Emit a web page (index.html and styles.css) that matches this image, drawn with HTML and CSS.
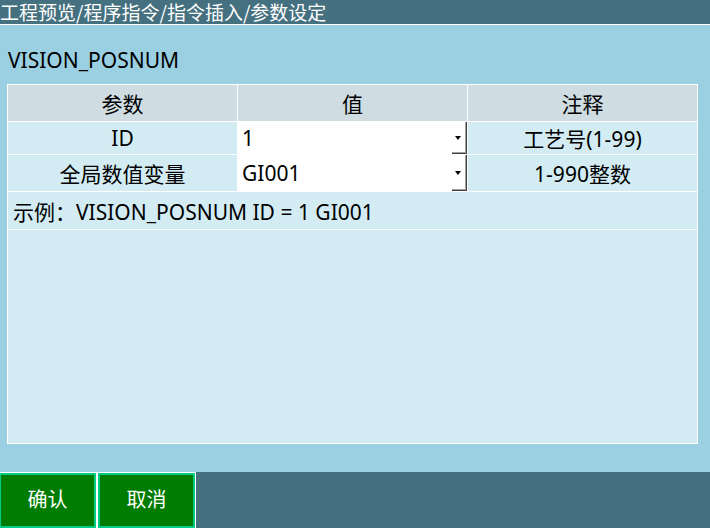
FILE: index.html
```html
<!DOCTYPE html>
<html lang="zh">
<head>
<meta charset="utf-8">
<link rel="stylesheet" href="styles.css">
</head>
<body>
<div class="screen">
  <div class="titlebar">工程预览/程序指令/指令插入/参数设定</div>
  <div class="main">
    <div class="heading">VISION_POSNUM</div>
    <div class="table">
      <div class="cell head">参数</div>
      <div class="cell head">值</div>
      <div class="cell head">注释</div>

      <div class="cell">ID</div>
      <div class="cell combo"><span class="combo-text">1</span><span class="combo-btn"><span class="arrow"></span></span></div>
      <div class="cell">工艺号(1-99)</div>

      <div class="cell">全局数值变量</div>
      <div class="cell combo"><span class="combo-text">GI001</span><span class="combo-btn"><span class="arrow"></span></span></div>
      <div class="cell">1-990整数</div>

      <div class="cell example">示例：VISION_POSNUM ID = 1 GI001</div>
      <div class="cell empty"></div>
    </div>
  </div>
  <div class="bottombar">
    <button class="btn btn-first">确认</button>
    <button class="btn">取消</button>
  </div>
</div>
</body>
</html>
```

FILE: styles.css
```css
* { box-sizing: border-box; }
html, body {
  margin: 0;
  padding: 0;
}
body {
  font-family: "Noto Sans", "Noto Sans CJK SC", sans-serif;
  background: #9bcfe2;
  color: #000;
  width: 710px;
  height: 528px;
  overflow: hidden;
}
.screen {
  display: flex;
  flex-direction: column;
  height: 528px;
}
.titlebar {
  height: 25px;
  background: #45707f;
  color: #fff;
  font-family: "Noto Sans CJK SC", sans-serif;
  font-size: 19px;
  line-height: 23px;
  border-bottom: 1px solid #fff;
  white-space: nowrap;
}
.main {
  flex: 1;
  padding: 0 0 0 7px;
  display: flex;
  flex-direction: column;
}
.heading {
  height: 59px;
  padding: 21px 0 0 1px;
  font-size: 21px;
  line-height: 28px;
}
.table {
  width: 691px;
  height: 360px;
  border: 1px solid #fff;
  background: #fff;
  display: grid;
  grid-template-columns: 229px 229px 229px;
  grid-template-rows: 36px 32px 36px 37px 1fr;
  gap: 1px;
}
.cell {
  background: #d3ecf4;
  font-size: 21px;
  display: flex;
  align-items: center;
  justify-content: center;
  white-space: nowrap;
}
.cell.head {
  background: #cfdce1;
}
.cell.combo {
  background: #fff;
  justify-content: flex-start;
  align-items: stretch;
}
.combo-text {
  flex: 1;
  padding-left: 4px;
  display: flex;
  align-items: center;
}
.combo-btn {
  width: 15px;
  border-right: 1px solid #404040;
  border-bottom: 1px solid #404040;
  box-shadow: inset -1px -1px 0 #a0a0a0;
  display: flex;
  align-items: center;
  justify-content: center;
  padding-right: 2px;
}
.arrow {
  width: 0;
  height: 0;
  border-left: 3px solid transparent;
  border-right: 3px solid transparent;
  border-top: 4px solid #000;
}
.cell.example {
  grid-column: 1 / 4;
  justify-content: flex-start;
  padding-left: 5px;
}
.cell.empty {
  grid-column: 1 / 4;
}
.bottombar {
  height: 56px;
  background: #45707f;
  display: flex;
}
.btn {
  width: 99px;
  height: 56px;
  margin: 0;
  padding: 0 0 4px 0;
  border: 1px solid #fff;
  border-bottom: none;
  background: #007c00;
  box-shadow: inset 0 0 0 2px #00cc88;
  color: #fff;
  font-family: "Noto Sans CJK SC", sans-serif;
  font-size: 20px;
  cursor: pointer;
}
.btn-first {
  margin-left: -2px;
}
```
